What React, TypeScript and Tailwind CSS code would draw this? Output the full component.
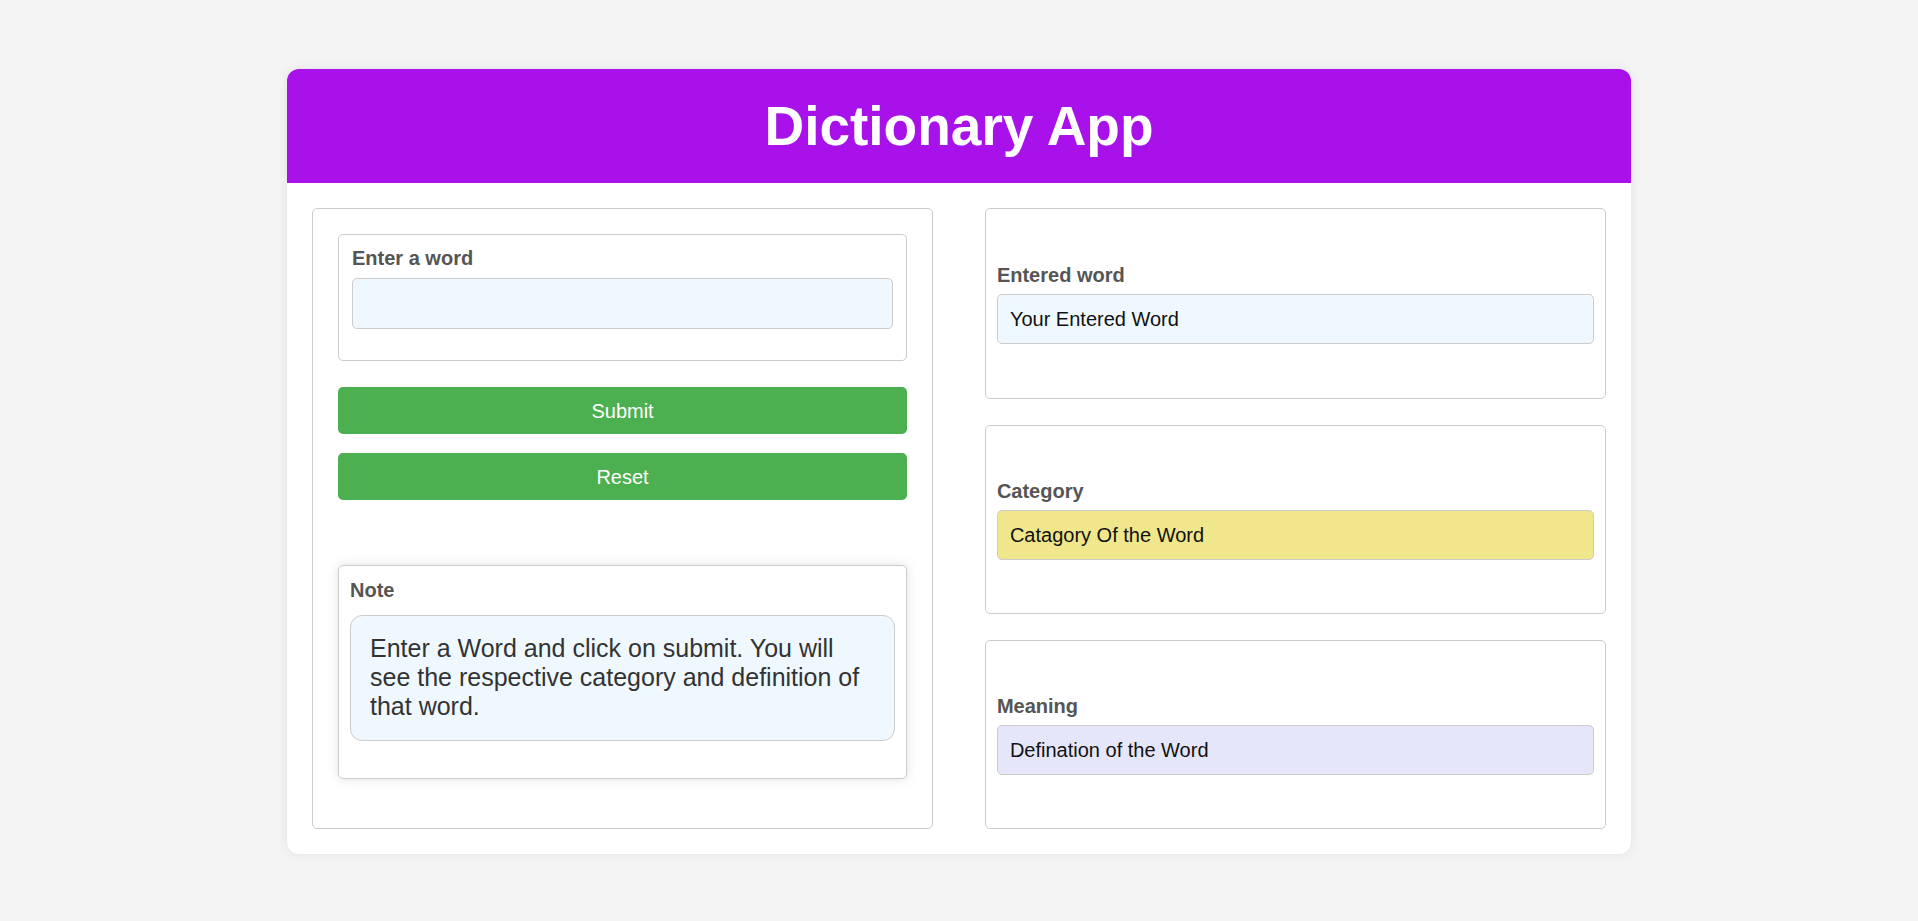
import React from "react";

type Field = { label: string; value: string; bg: string; h: string };

const fields: Field[] = [
  { label: "Entered word", value: "Your Entered Word", bg: "bg-[#f0f8ff]", h: "h-[191px]" },
  { label: "Category", value: "Catagory Of the Word", bg: "bg-[#f0e68c]", h: "h-[189px]" },
  { label: "Meaning", value: "Defination of the Word", bg: "bg-[#e6e6fa]", h: "h-[189px]" },
];

export default function App() {
  return (
    <div className="min-h-screen bg-[#f4f4f4] pt-[69px] pb-[40px] font-['Liberation_Sans',Arial,sans-serif]">
      <div className="mx-auto w-[1344px] rounded-[12px] bg-white shadow-[0_0_12px_rgba(0,0,0,0.08)]">
        <header className="flex h-[114px] items-center justify-center rounded-t-[12px] bg-[#a811e9]">
          <h1 className="text-[55px] font-bold leading-none text-white">Dictionary App</h1>
        </header>

        <div className="flex justify-between p-[25px]">
          {/* input side */}
          <div className="w-[48%] rounded-[5px] border border-[#ccc] p-[25px]">
            <div className="rounded-[5px] border border-[#ccc] px-[13px] pt-[12px] pb-[31px]">
              <label className="mb-[8px] block text-[20px] font-bold leading-[23px] text-[#555]">Enter a word</label>
              <input
                type="text"
                className="block h-[51px] w-full rounded-[5px] border border-[#ccc] bg-[#f0f8ff] px-[12px] text-[20px] outline-none"
              />
            </div>

            <button className="mt-[26px] block h-[47px] w-full rounded-[5px] bg-[#4caf50] text-[20px] text-white">
              Submit
            </button>
            <button className="mt-[19px] block h-[47px] w-full rounded-[5px] bg-[#4caf50] text-[20px] text-white">
              Reset
            </button>

            <div className="mt-[65px] rounded-[5px] border border-[#ccc] px-[11px] pt-[13px] pb-[37px] shadow-[0_0_12px_rgba(0,0,0,0.12)]">
              <div className="mb-[13px] text-[20px] font-bold leading-[23px] text-[#555]">Note</div>
              <p className="rounded-[12px] border border-[#ccc] bg-[#f0f8ff] px-[19px] pt-[18px] pb-[20px] text-[25px] leading-[28.75px] text-[#333]">
                Enter a Word and click on submit. You will see the respective category and definition of that word.
              </p>
            </div>
          </div>

          {/* result side */}
          <div className="flex w-[48%] flex-col gap-[26px]">
            {fields.map((f) => (
              <div
                key={f.label}
                className={`flex ${f.h} flex-col justify-center rounded-[5px] border border-[#ccc] px-[11px]`}
              >
                <div className="mb-[7px] text-[20px] font-bold leading-[23px] text-[#555]">{f.label}</div>
                <div
                  className={`flex h-[50px] items-center rounded-[5px] border border-[#ccc] ${f.bg} px-[12px] text-[20px] text-[#111]`}
                >
                  {f.value}
                </div>
              </div>
            ))}
          </div>
        </div>
      </div>
    </div>
  );
}
